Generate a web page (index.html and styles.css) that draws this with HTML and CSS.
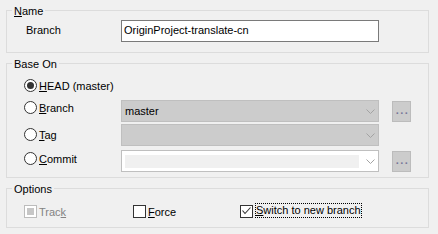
FILE: index.html
```html
<!DOCTYPE html>
<html>
<head>
<meta charset="utf-8">
<link rel="stylesheet" href="styles.css">
</head>
<body>
<div class="dialog">
  <fieldset class="group group-name">
    <legend><u>N</u>ame</legend>
    <div class="name-row">
      <span class="label">Branch</span>
      <div class="textbox">OriginProject-translate-cn</div>
    </div>
  </fieldset>

  <fieldset class="group group-base">
    <legend>Base On</legend>
    <div class="row row-head">
      <label class="radio-label"><span class="radio checked"></span><span><u>H</u>EAD (master)</span></label>
    </div>
    <div class="row row-branch">
      <label class="radio-label"><span class="radio"></span><span><u>B</u>ranch</span></label>
      <div class="combo disabled"><span class="combo-text">master</span><svg class="chev" width="9" height="5" viewBox="0 0 9 5"><polyline points="0.5,0.5 4.5,4.5 8.5,0.5" fill="none" stroke="#a3a3a3" stroke-width="1"/></svg></div>
      <div class="ellipsis">...</div>
    </div>
    <div class="row row-tag">
      <label class="radio-label"><span class="radio"></span><span><u>T</u>ag</span></label>
      <div class="combo disabled"><span class="combo-text"></span><svg class="chev" width="9" height="5" viewBox="0 0 9 5"><polyline points="0.5,0.5 4.5,4.5 8.5,0.5" fill="none" stroke="#a3a3a3" stroke-width="1"/></svg></div>
    </div>
    <div class="row row-commit">
      <label class="radio-label"><span class="radio"></span><span><u>C</u>ommit</span></label>
      <div class="combo editable"><span class="combo-edit"></span><svg class="chev" width="9" height="5" viewBox="0 0 9 5"><polyline points="0.5,0.5 4.5,4.5 8.5,0.5" fill="none" stroke="#a3a3a3" stroke-width="1"/></svg></div>
      <div class="ellipsis">...</div>
    </div>
  </fieldset>

  <fieldset class="group group-options">
    <legend>Options</legend>
    <div class="opts">
      <label class="check-label disabled opt-track"><span class="check indeterminate"></span><span>Trac<u>k</u></span></label>
      <label class="check-label opt-force"><span class="check"></span><span><u>F</u>orce</span></label>
      <label class="check-label opt-switch"><span class="check checked"><svg width="11" height="11" viewBox="0 0 11 11"><polyline points="1.5,4.5 4,7.5 9.5,1.5" fill="none" stroke="#333" stroke-width="1.1"/></svg></span><span class="focus"><u>S</u>witch to new branch</span></label>
    </div>
  </fieldset>
</div>
</body>
</html>
```

FILE: styles.css
```css
html, body {
  margin: 0;
  padding: 0;
  background: #f0f0f0;
}
body {
  font-family: "Liberation Sans", Arial, sans-serif;
  font-size: 11px;
  color: #000;
  width: 438px;
  height: 234px;
  overflow: hidden;
}
.dialog {
  padding: 1px 0 0 6px;
  display: flex;
  flex-direction: column;
  gap: 1px;
}
.group {
  margin: 0;
  width: 423px;
  box-sizing: border-box;
  border: 1px solid #dcdcdc;
  padding: 0;
  min-width: 0;
}
.group legend {
  margin-left: 5px;
  padding: 2px 2px 0 2px;
  line-height: 16px;
  height: 18px;
  box-sizing: border-box;
  white-space: nowrap;
}
u {
  text-decoration: underline;
  text-underline-offset: 1px;
}
label, span {
  white-space: nowrap;
}

/* Name group */
.group-name {
  height: 52px;
}
.name-row {
  display: flex;
  align-items: flex-start;
  margin-top: 1px;
  padding-left: 19px;
}
.name-row .label {
  width: 95px;
  line-height: 19px;
  margin-top: 1px;
}
.textbox {
  width: 258px;
  height: 22px;
  box-sizing: border-box;
  border: 1px solid #7a7a7a;
  background: #fff;
  padding: 0 2px;
  line-height: 19px;
}

/* Base On group */
.group-base {
  height: 124px;
}
.row {
  display: flex;
  align-items: flex-start;
  padding-left: 17px;
}
.radio-label, .check-label {
  display: flex;
  align-items: center;
  gap: 2px;
}
.radio-label {
  width: 97px;
}
.radio {
  flex: none;
  width: 13px;
  height: 13px;
  box-sizing: border-box;
  border: 1px solid #333;
  border-radius: 50%;
  background: #fff;
  display: flex;
  align-items: center;
  justify-content: center;
}
.radio.checked::after {
  content: "";
  width: 7px;
  height: 7px;
  border-radius: 50%;
  background: #333;
}
.row-head {
  margin-top: 7px;
  height: 17px;
}
.row-branch {
  margin-top: 4px;
  height: 22px;
}
.row-branch .radio-label { margin-top: 1px; }
.row-tag {
  margin-top: 2px;
  height: 22px;
}
.row-tag .radio-label { margin-top: 4px; }
.row-commit {
  margin-top: 4px;
  height: 22px;
}
.row-commit .radio-label { margin-top: 2px; }

.combo {
  width: 258px;
  height: 22px;
  box-sizing: border-box;
  border: 1px solid #bfbfbf;
  display: flex;
  align-items: center;
  padding: 0 3px 0 3px;
}
.combo.disabled {
  background: #cccccc;
}
.combo-text {
  flex: 1;
  color: #000;
}
.combo.editable {
  background: #fff;
}
.combo-edit {
  width: 234px;
  height: 13px;
  background: #f0f0f0;
}
.chev {
  margin-left: auto;
}
.ellipsis {
  margin-left: 13px;
  margin-top: 1px;
  width: 19px;
  height: 21px;
  box-sizing: border-box;
  border: 1px solid #bcbcbc;
  background: #cccccc;
  color: #77779a;
  font-weight: bold;
  text-align: center;
  line-height: 17px;
  letter-spacing: 1.5px;
  padding-left: 2px;
}

/* Options group */
.group-options {
  height: 49px;
}
.opts {
  display: flex;
  margin-top: 8px;
  padding-left: 17px;
}
.check {
  flex: none;
  width: 13px;
  height: 13px;
  box-sizing: border-box;
  border: 1px solid #333;
  background: #fff;
  display: flex;
  align-items: center;
  justify-content: center;
}
.check.indeterminate {
  border-color: #bcbcbc;
}
.check.indeterminate::after {
  content: "";
  width: 7px;
  height: 7px;
  background: #c6c6c6;
}
.check-label.disabled {
  color: #838383;
}
.opt-track { width: 109px; }
.opt-force { width: 107px; }
.opt-switch {
  align-items: flex-start;
  gap: 3px;
}
.focus {
  outline: 1px dotted #000;
  line-height: 13px;
  margin-top: -1px;
}
```
